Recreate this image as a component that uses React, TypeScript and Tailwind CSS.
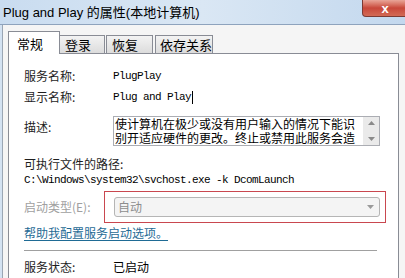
import React from "react";

const cjk = { fontFamily: '"Noto Sans CJK SC", "Liberation Sans", sans-serif' };
const mono = { fontFamily: '"Liberation Mono", "Noto Sans CJK SC", monospace' };

const Tab = ({ label, active, className }: { label: string; active?: boolean; className: string }) => (
  <div
    className={`flex items-center whitespace-nowrap border border-[#898c95] text-[13px] text-black ${
      active
        ? "h-[23px] bg-white border-b-0 z-10 pl-[8px]"
        : "h-[19px] mt-[4px] bg-gradient-to-b from-[#f3f3f3] to-[#dcdcdc] pl-[5px]"
    } ${className}`}
  >
    {label}
  </div>
);

const App = () => {
  return (
    <div className="w-[405px] h-[278px] overflow-hidden relative bg-[#f0f0f0] text-[12px] leading-none" style={cjk}>
      {/* Title bar */}
      <div className="h-[25px] bg-gradient-to-r from-[#c9dcf0] via-[#dae7f4] to-[#c3d8ee] border-b border-[#8ea3bd] flex items-center pl-[3px]">
        <span className="text-[13px] text-black" style={{ fontFamily: '"Liberation Sans", "Noto Sans CJK SC", sans-serif' }}>
          Plug and Play 的属性(本地计算机)
        </span>
      </div>
      <div className="absolute top-0 left-[362px] w-[46px] h-[17px] rounded-bl-[4px] border border-t-0 border-[#7b3a33] bg-gradient-to-b from-[#e8a598] via-[#c8473a] to-[#d26a55] flex items-center justify-center">
        <span className="text-white text-[13px] font-bold" style={{ fontFamily: '"Liberation Sans", sans-serif' }}>x</span>
      </div>

      {/* Window body */}
      <div className="h-[253px] border-l-[2px] border-[#d3e2f2] flex">
        <div className="w-px bg-[#9aa6b4]" />
        <div className="flex-1 pl-[5px] pt-[6px] bg-[#f5f5f5]">
          {/* Tabs */}
          <div className="flex h-[23px] items-start">
            <Tab label="常规" active className="w-[52px]" />
            <Tab label="登录" className="w-[46px] -ml-px" />
            <Tab label="恢复" className="w-[47px] ml-px" />
            <Tab label="依存关系" className="w-[58px] ml-[2px] !pl-[4px]" />
          </div>

          {/* Panel */}
          <div className="w-[391px] h-[230px] -mt-px bg-white border border-[#898c95] pl-[15px] pt-[13px]">
            <div className="flex items-center h-[18px]">
              <span className="w-[89px] text-[#1e1e1e]">服务名称:</span>
              <span className="text-[11px] tracking-[-0.6px] text-black" style={mono}>PlugPlay</span>
            </div>
            <div className="flex items-center h-[18px] mt-[3px]">
              <span className="w-[89px] text-[#1e1e1e]">显示名称:</span>
              <span className="text-[11px] tracking-[-0.6px] text-black flex items-center" style={mono}>
                Plug and Play<span className="inline-block w-px h-[13px] bg-black ml-[1px]" />
              </span>
            </div>
            <div className="flex mt-[10px]">
              <span className="w-[89px] pt-[5px] text-[#1e1e1e]">描述:</span>
              <div className="w-[267px] h-[30px] border border-[#abadb3] flex overflow-hidden">
                <div className="flex-1 pl-[1px] text-[12px] leading-[14px] text-black">
                  <div>使计算机在极少或没有用户输入的情况下能识</div>
                  <div>别开适应硬件的更改。终止或禁用此服务会造</div>
                </div>
                <div className="w-[16px] bg-[#eaeaea] flex flex-col items-center justify-between py-[4px]">
                  <svg width="7" height="4" viewBox="0 0 7 4"><path d="M0 4 L3.5 0 L7 4 Z" fill="#8a8a8a" /></svg>
                  <svg width="7" height="4" viewBox="0 0 7 4"><path d="M0 0 L3.5 4 L7 0 Z" fill="#8a8a8a" /></svg>
                </div>
              </div>
            </div>
            <div className="mt-[12px] h-[14px] text-[#1e1e1e]">可执行文件的路径:</div>
            <div className="h-[14px] mt-[1px] text-[11px] tracking-[-0.6px] text-black flex items-center" style={mono}>
              C:\Windows\system32\svchost.exe -k DcomLaunch
            </div>

            <div className="flex items-center mt-[4px] h-[32px]">
              <span className="w-[80px] text-[#a0a0a0]">启动类型(E):</span>
              <div className="w-[282px] h-[32px] border border-[#c9474f] flex items-center pl-[9px]">
                <div className="w-[266px] h-[20px] rounded-[3px] border border-[#b5b5b5] bg-[#f4f4f4] flex items-center justify-between pl-[3px] pr-[5px]">
                  <span className="text-[#8d8d8d] text-[12px]">自动</span>
                  <svg width="7" height="4" viewBox="0 0 7 4"><path d="M0 0 L3.5 4 L7 0 Z" fill="#9a9a9a" /></svg>
                </div>
              </div>
            </div>

            <div className="mt-[4px] h-[14px] text-[#1f6b95] underline underline-offset-2">帮助我配置服务启动选项。</div>
            <div className="mt-[9px] w-[353px] h-px bg-[#a0a0a0]" />
            <div className="flex items-center h-[18px] mt-[7px]">
              <span className="w-[89px] text-[#1e1e1e]">服务状态:</span>
              <span className="text-black">已启动</span>
            </div>
          </div>
        </div>
      </div>
    </div>
  );
};

export default App;
